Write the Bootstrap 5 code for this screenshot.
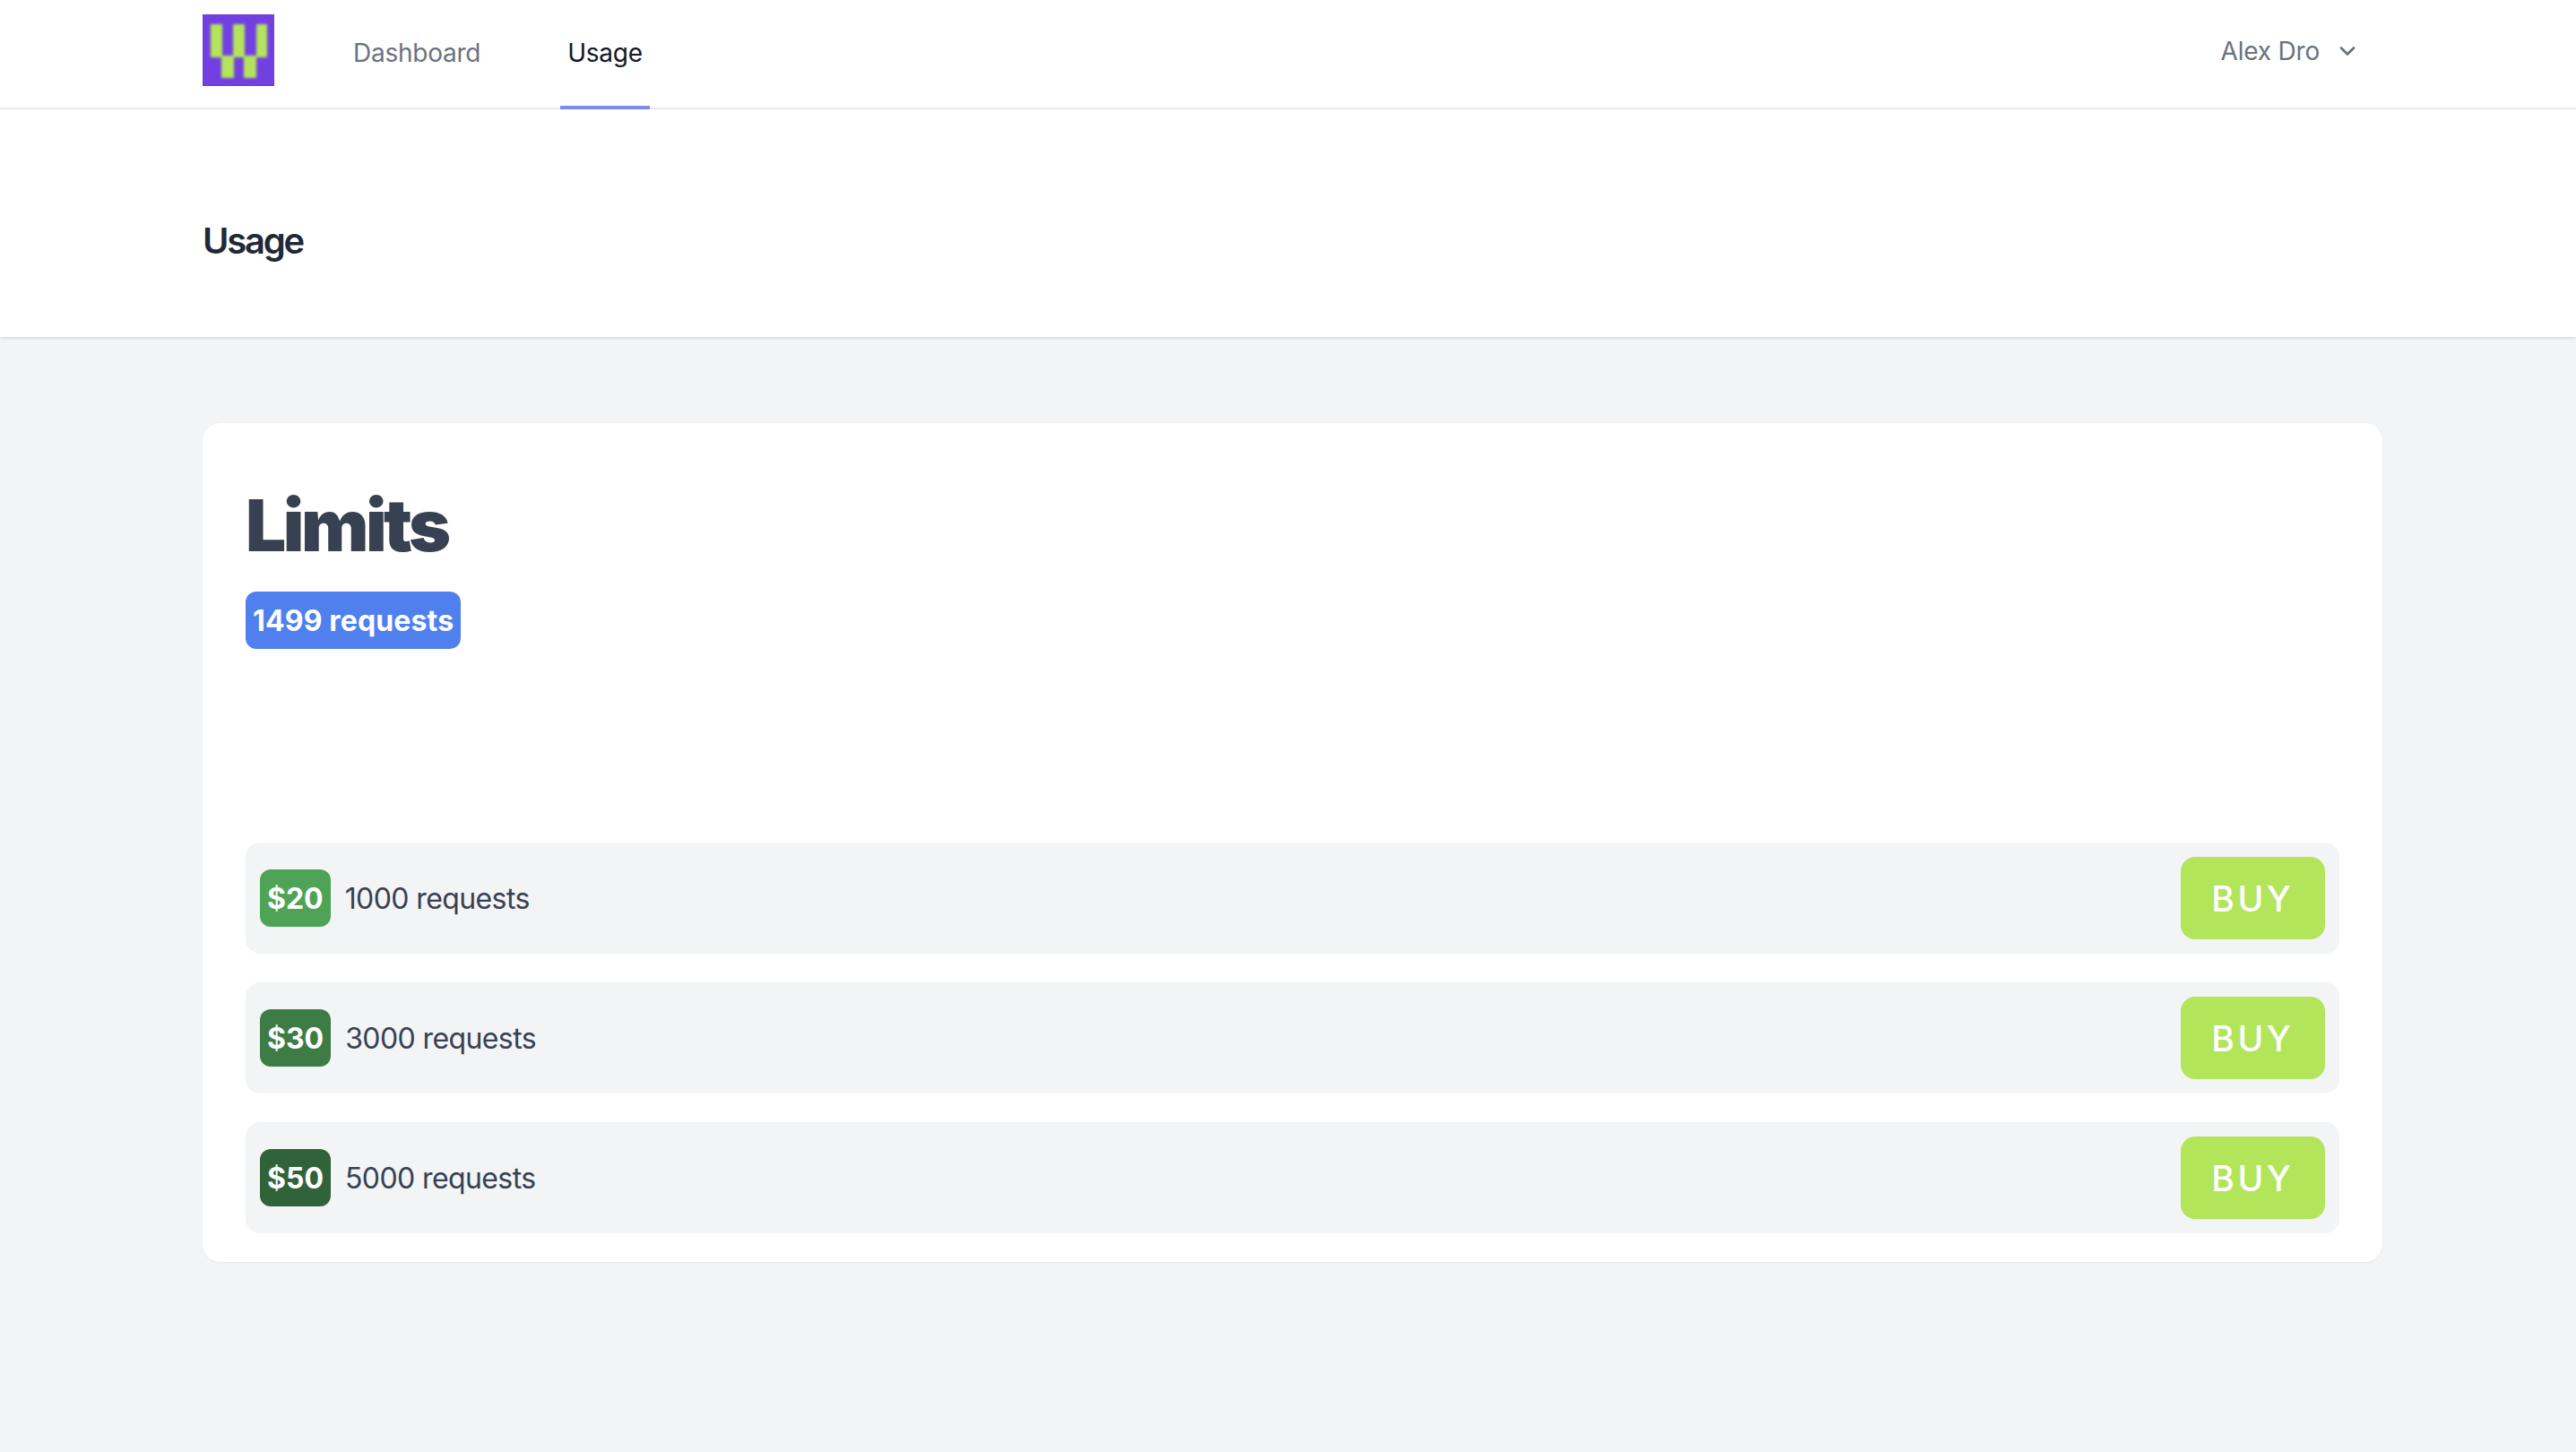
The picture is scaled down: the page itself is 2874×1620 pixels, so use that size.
<!DOCTYPE html>
<html lang="en">
<head>
<meta charset="utf-8">
<title>Usage</title>
<link href="https://cdn.jsdelivr.net/npm/bootstrap@5.3.0/dist/css/bootstrap.min.css" rel="stylesheet">
<style>
body { background:#f3f4f6; font-family:Inter,"Liberation Sans",sans-serif; color:#374151; min-height:1620px; -webkit-font-smoothing:antialiased; }
.shell { width:2432px; margin-left:226px; }
.topbar { background:#fff; height:122px; border-bottom:2px solid #f0f1f3; padding:0; align-items:stretch; flex-wrap:nowrap; }
.topbar .shell { position:relative; display:flex; align-items:stretch; justify-content:space-between; }
.logo-box { width:80px; height:80px; margin-top:16px; display:block; }
.tabs { margin-left:80px; gap:81px; flex-direction:row; flex-wrap:nowrap; }
.tab-item { font-size:28px; line-height:40px; font-weight:400; color:#6b7280; padding:0 8px; height:122px; margin-bottom:-2px; border-bottom:4px solid transparent; display:flex; align-items:center; letter-spacing:-.25px; }
.tab-item.active-tab { color:#111827; border-bottom-color:#818cf8; }
.user-menu { font-size:28px; line-height:40px; color:#6b7280; background:none; border:0; padding:0 30px 6px 0; gap:22px; letter-spacing:-.2px; }
.page-head { background:#fff; height:254px; padding-top:119px; box-shadow:0 1px 4px rgba(0,0,0,.16); position:relative; }
.page-title { font-size:40px; line-height:56px; font-weight:600; color:#1f2937; margin:0; letter-spacing:-2.2px; }
.panel { margin-top:96px; background:#fff; border:0; border-radius:20px; padding:64px 48px 32px; box-shadow:0 1px 3px rgba(0,0,0,.05); height:936px; }
.panel-title { font-size:80px; line-height:100px; font-weight:900; color:#374151; margin:0; letter-spacing:-3.5px; }
.pill { font-family:inherit; font-size:32px; line-height:44px; font-weight:700; color:#fff; padding:11px 8px 9px; border-radius:12px; }
.pill-blue { background:#4f80ee; margin-top:24px; letter-spacing:.15px; }
.pill-g1 { background:#4ea357; }
.pill-g2 { background:#3e7c46; }
.pill-g3 { background:#31633a; }
.offers { margin-top:216px; gap:32px; }
.offer { background:#f3f4f6; border-radius:16px; padding:16px; height:124px; }
.offer-text { font-size:32px; line-height:44px; color:#374151; margin-left:16px; margin-top:2px; letter-spacing:-.6px; }
.buy-btn { background:#b3e55b; border:0; color:#fff; font-size:39px; line-height:56px; font-weight:500; letter-spacing:3.5px; padding:19px 34.5px 17px; height:92px; border-radius:16px; }
.buy-btn:hover { background:#b3e55b; color:#fff; }
</style>
</head>
<body>
<nav class="navbar topbar">
  <div class="shell">
    <div class="d-flex">
      <svg class="logo-box" viewBox="0 0 80 80" role="img" aria-label="Logo">
        <defs><filter id="soft" x="-10%" y="-10%" width="120%" height="120%"><feGaussianBlur stdDeviation="1.7"/></filter></defs>
        <rect width="80" height="80" fill="#723fe0"/>
        <g fill="#b3e55b" filter="url(#soft)">
          <rect x="9" y="11" width="13" height="37"/>
          <rect x="34" y="11" width="13" height="37"/>
          <rect x="60" y="11" width="12" height="37"/>
          <rect x="21" y="46" width="14" height="25"/>
          <rect x="46" y="46" width="14" height="25"/>
        </g>
      </svg>
      <div class="nav tabs">
        <a class="nav-link tab-item" href="#">Dashboard</a>
        <a class="nav-link tab-item active-tab" href="#">Usage</a>
      </div>
    </div>
    <button class="user-menu d-flex align-items-center" type="button">
      <span>Alex Dro</span>
      <svg width="18" height="18" viewBox="0 0 18 18" fill="none" stroke="#6b7280" stroke-width="2.8" stroke-linecap="round" stroke-linejoin="round"><path d="M2 5.5 9 12.5l7-7"/></svg>
    </button>
  </div>
</nav>
<header class="page-head">
  <div class="shell"><h2 class="page-title">Usage</h2></div>
</header>
<main class="shell">
  <section class="card panel">
    <h1 class="panel-title">Limits</h1>
    <div><span class="badge pill pill-blue d-inline-block">1499 requests</span></div>
    <div class="offers d-flex flex-column">
      <div class="offer d-flex align-items-center justify-content-between">
        <div class="d-flex align-items-center"><span class="badge pill pill-g1">$20</span><span class="offer-text">1000 requests</span></div>
        <button class="btn buy-btn" type="button">BUY</button>
      </div>
      <div class="offer d-flex align-items-center justify-content-between">
        <div class="d-flex align-items-center"><span class="badge pill pill-g2">$30</span><span class="offer-text">3000 requests</span></div>
        <button class="btn buy-btn" type="button">BUY</button>
      </div>
      <div class="offer d-flex align-items-center justify-content-between">
        <div class="d-flex align-items-center"><span class="badge pill pill-g3">$50</span><span class="offer-text">5000 requests</span></div>
        <button class="btn buy-btn" type="button">BUY</button>
      </div>
    </div>
  </section>
</main>
<script src="https://cdn.jsdelivr.net/npm/bootstrap@5.3.0/dist/js/bootstrap.bundle.min.js"></script>
</body>
</html>
